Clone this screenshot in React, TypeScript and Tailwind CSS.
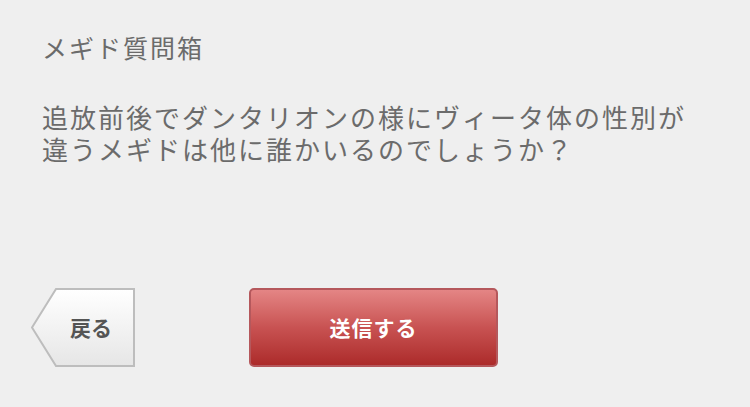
import React from "react";

export default function App() {
  return (
    <div
      className="w-[750px] h-[407px] bg-[#efefef] overflow-hidden flex flex-col"
      style={{ fontFamily: '"Noto Sans CJK JP", "Noto Sans", sans-serif' }}
    >
      <div className="pl-[42px] pt-[30px] text-[25px] leading-[34px] tracking-[2px] text-[#6b6b6b]">
        メギド質問箱
      </div>
      <div className="pl-[42px] pt-[37px] text-[26px] leading-[32px] tracking-[2px] text-[#6b6b6b]">
        <div>追放前後でダンタリオンの様にヴィータ体の性別が</div>
        <div>違うメギドは他に誰かいるのでしょうか？</div>
      </div>
      <div className="flex items-start pl-[31px] pt-[123px] gap-[114px]">
        <button className="relative w-[104px] h-[79px] flex items-center justify-center">
          <svg className="absolute inset-0" width="104" height="79" viewBox="0 0 104 79">
            <defs>
              <linearGradient id="bg" x1="0" y1="0" x2="0" y2="1">
                <stop offset="0" stopColor="#ffffff" />
                <stop offset="1" stopColor="#e6e6e6" />
              </linearGradient>
            </defs>
            <polygon
              points="25,1 103,1 103,78 25,78 1,39.5"
              fill="url(#bg)"
              stroke="#bdbdbd"
              strokeWidth="2"
            />
          </svg>
          <span className="relative pl-[16px] text-[21px] font-bold text-[#555555]">戻る</span>
        </button>
        <button className="w-[249px] h-[79px] rounded-[5px] border-2 border-[#b5585c] bg-gradient-to-b from-[#e48585] via-[#c85252] to-[#ac2a2a] flex items-center justify-center text-white text-[21px] font-bold tracking-[1px]">
          送信する
        </button>
      </div>
    </div>
  );
}
